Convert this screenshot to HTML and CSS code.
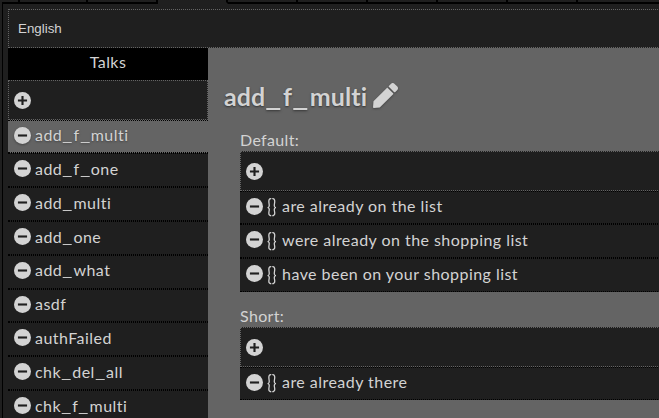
FILE: index.html
```
<!DOCTYPE html>
<html lang="en">
<head>
<meta charset="utf-8">
<title>Talks</title>
<link rel="stylesheet" href="styles.css">
</head>
<body>
<svg class="defs" aria-hidden="true">
<symbol id="minus" viewBox="0 0 16 16"><circle cx="8" cy="8" r="8" fill="currentColor"/><path d="M3.7 8h8.6" stroke="#1f1f1f" stroke-width="2"/></symbol>
<symbol id="plus" viewBox="0 0 16 16"><circle cx="8" cy="8" r="8" fill="currentColor"/><path d="M3.7 8h8.6M8 3.7v8.6" stroke="#1f1f1f" stroke-width="2"/></symbol>
</svg>
<div class="tabs"><i class="t first"></i><i class="t"></i><i class="t"></i><i class="t active"></i><i class="t"></i><i class="t"></i><i class="t"></i><i class="t"></i><i class="t"></i><i class="t last"></i></div>
<div class="panel">
<div class="lang">English</div>
<div class="body">
<nav class="side">
<div class="head">Talks</div>
<div class="add"><svg class="ico"><use href="#plus"/></svg></div>
<div class="row sel"><svg class="ico"><use href="#minus"/></svg><span>add<b class="us">_</b>f<b class="us">_</b>multi</span></div>
<div class="row"><svg class="ico"><use href="#minus"/></svg><span>add<b class="us">_</b>f<b class="us">_</b>one</span></div>
<div class="row"><svg class="ico"><use href="#minus"/></svg><span>add<b class="us">_</b>multi</span></div>
<div class="row"><svg class="ico"><use href="#minus"/></svg><span>add<b class="us">_</b>one</span></div>
<div class="row"><svg class="ico"><use href="#minus"/></svg><span>add<b class="us">_</b>what</span></div>
<div class="row"><svg class="ico"><use href="#minus"/></svg><span>asdf</span></div>
<div class="row"><svg class="ico"><use href="#minus"/></svg><span>authFailed</span></div>
<div class="row"><svg class="ico"><use href="#minus"/></svg><span>chk<b class="us">_</b>del<b class="us">_</b>all</span></div>
<div class="row"><svg class="ico"><use href="#minus"/></svg><span>chk<b class="us">_</b>f<b class="us">_</b>multi</span></div>
</nav>
<main class="main">
<h1 class="title"><span>add<b class="us">_</b>f<b class="us">_</b>multi</span><svg class="pencil" viewBox="0 0 512 512"><path fill="currentColor" d="M498 142l-46 46c-5 5-12 5-17 0L324 77c-5-5-5-12 0-17l46-46c19-19 49-19 68 0l60 60c19 19 19 49 0 68zM284 100L10 374 1 494c-1 10 7 18 17 17l120-9 274-274c5-5 5-12 0-17L301 100c-5-5-12-5-17 0z"/></svg></h1>
<div class="label">Default:</div>
<div class="add"><svg class="ico"><use href="#plus"/></svg></div>
<div class="row"><svg class="ico"><use href="#minus"/></svg><span class="b">{}</span><span>are already on the list</span></div>
<div class="row"><svg class="ico"><use href="#minus"/></svg><span class="b">{}</span><span>were already on the shopping list</span></div>
<div class="row"><svg class="ico"><use href="#minus"/></svg><span class="b">{}</span><span>have been on your shopping list</span></div>
<div class="label second">Short:</div>
<div class="add"><svg class="ico"><use href="#plus"/></svg></div>
<div class="row"><svg class="ico"><use href="#minus"/></svg><span class="b">{}</span><span>are already there</span></div>
</main>
</div>
</div>
</body>
</html>
```
FILE: styles.css
```
* { box-sizing: border-box; }
body { margin: 0; width: 659px; height: 418px; overflow: hidden; background: #1f1f1f; color: #d3d3d3; font: 16px/20px Lato, sans-serif; letter-spacing: .46px; }
.defs { display: none; }
.tabs { display: flex; height: 4px; padding-left: 2px; }
.t { flex: none; width: 70px; border-right: 2px solid #000; border-bottom: 2px solid #000; }
.t.first { width: 18px; height: 4px; }
.t.first + .t { width: 68px; }
.t.active { border-bottom-color: #1f1f1f; }
.t.last { width: 90px; }
.panel { margin-left: 2px; height: 414px; border-left: 1px solid #000; padding: 5px 0 0 5px; }
.lang { width: 670px; height: 39px; border: 1px dotted #646464; padding: 0 9px; font: 13.33px/37px "Liberation Sans", sans-serif; letter-spacing: 0; }
.body { display: flex; height: 371px; background: #646464; }
.side { width: 200px; flex: none; }
.head { height: 32px; background: #000; line-height: 27px; text-align: center; }
.add { height: 39.6px; border: 1px dotted #646464; background: #1f1f1f; padding: 1px 0 0 5px; display: flex; align-items: center; }
.row { height: 33.8px; border-top: 1px dotted #000; border-bottom: 1px dotted #000; background: #1f1f1f; padding: 0 0 2.6px 6px; display: flex; align-items: center; white-space: nowrap; }
.sel { background: #646464; text-shadow: 0 1px 2px #444; }
.sel .ico { filter: drop-shadow(0 1px 1px #444); }
.ico { width: 17px; height: 17px; margin-right: 4px; flex: none; }
.us { display: inline-block; font-weight: inherit; letter-spacing: 0; transform: scaleX(1.42); transform-origin: left; margin-right: .24em; }
.main { width: 451px; padding: 32px 0 0 32px; flex: none; }
.title { margin: 0 0 0 -16px; height: 32px; display: flex; align-items: center; font-size: 25px; font-weight: 700; line-height: 32px; letter-spacing: .1px; text-shadow: 0 1px 2px #333; }
.pencil { width: 25px; height: 25px; margin: -1px 0 0 6px; filter: drop-shadow(0 1px 1px #444); }
.label { margin-top: 18px; height: 21px; letter-spacing: .35px; }
.label.second { margin-top: 14px; }
.main .row, .main .add { width: 430px; }
.b { width: 15px; letter-spacing: 0; transform: scaleY(1.2); }
```
